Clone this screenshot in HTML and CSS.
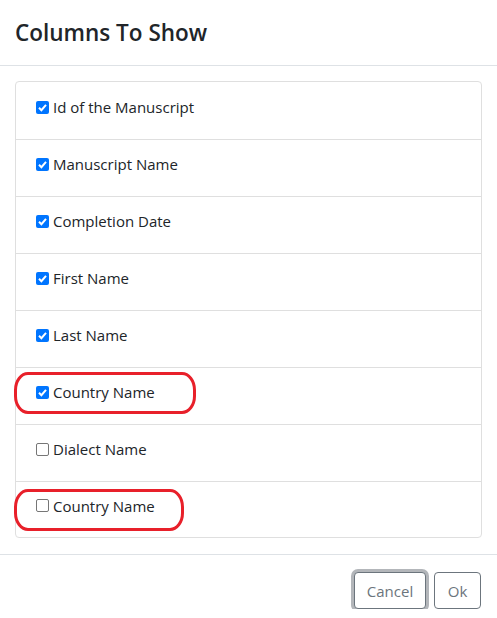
FILE: index.html
```html
<!DOCTYPE html>
<html>
<head>
<meta charset="utf-8">
<link rel="stylesheet" href="styles.css">
</head>
<body>
<div class="modal">
  <div class="modal-header">
    <h5 class="modal-title">Columns To Show</h5>
  </div>
  <div class="modal-body">
    <ul class="list">
      <li class="item"><span class="cb on"><svg viewBox="0 0 13 13"><path d="M3 6.8 L5.4 9.2 L10 3.8" /></svg></span><span class="label">Id of the Manuscript</span></li>
      <li class="item"><span class="cb on"><svg viewBox="0 0 13 13"><path d="M3 6.8 L5.4 9.2 L10 3.8" /></svg></span><span class="label">Manuscript Name</span></li>
      <li class="item"><span class="cb on"><svg viewBox="0 0 13 13"><path d="M3 6.8 L5.4 9.2 L10 3.8" /></svg></span><span class="label">Completion Date</span></li>
      <li class="item"><span class="cb on"><svg viewBox="0 0 13 13"><path d="M3 6.8 L5.4 9.2 L10 3.8" /></svg></span><span class="label">First Name</span></li>
      <li class="item"><span class="cb on"><svg viewBox="0 0 13 13"><path d="M3 6.8 L5.4 9.2 L10 3.8" /></svg></span><span class="label">Last Name</span></li>
      <li class="item"><span class="cb on"><svg viewBox="0 0 13 13"><path d="M3 6.8 L5.4 9.2 L10 3.8" /></svg></span><span class="label">Country Name</span><span class="mark mark-a"></span></li>
      <li class="item"><span class="cb off"></span><span class="label">Dialect Name</span></li>
      <li class="item"><span class="cb off"></span><span class="label">Country Name</span><span class="mark mark-b"></span></li>
    </ul>
  </div>
  <div class="modal-footer">
    <button class="btn btn-focus">Cancel</button>
    <button class="btn btn-ok">Ok</button>
  </div>
</div>
</body>
</html>
```
FILE: styles.css
```css
html, body {
  margin: 0;
  padding: 0;
  background: #fff;
}
body {
  font-family: "Open Sans", "Noto Sans", sans-serif;
  color: #212529;
  width: 497px;
}
.modal {
  display: flex;
  flex-direction: column;
}
.modal-header {
  height: 66px;
  box-sizing: border-box;
  border-bottom: 1px solid #dee2e6;
  padding: 0 15px;
  display: flex;
  align-items: center;
}
.modal-title {
  margin: 0;
  font-size: 22.5px;
  font-weight: 600;
  line-height: 1;
  padding-top: 1px;
  color: #212529;
}
.modal-body {
  padding: 15px 15px 16px;
}
.list {
  list-style: none;
  margin: 0;
  padding: 0;
  border: 1px solid #dfdfdf;
  border-radius: 4px;
}
.item {
  position: relative;
  height: 57px;
  box-sizing: border-box;
  padding: 0 20px 8px;
  display: flex;
  align-items: center;
  border-top: 1px solid #dfdfdf;
  font-size: 15px;
}
.item:first-child {
  border-top: none;
  padding-bottom: 7px;
}
.item:last-child {
  height: 56px;
}
.cb {
  width: 13px;
  height: 13px;
  box-sizing: border-box;
  border-radius: 2px;
  margin-right: 4px;
  flex: none;
  display: flex;
}
.cb.on {
  background: #0075ff;
}
.cb.off {
  border: 1px solid #767676;
  background: #fff;
}
.cb svg {
  width: 13px;
  height: 13px;
  fill: none;
  stroke: #fff;
  stroke-width: 2;
}
.label {
  line-height: 24px;
}
.mark {
  position: absolute;
  border: 3px solid #e8202a;
  border-radius: 14px / 18px;
  box-sizing: border-box;
  pointer-events: none;
}
.mark-a {
  left: -2px;
  top: 4px;
  width: 182px;
  height: 42px;
}
.mark-b {
  left: -2px;
  top: 7px;
  width: 170px;
  height: 42px;
}
.modal-footer {
  border-top: 1px solid #dee2e6;
  padding: 17px 16px 0 0;
  display: flex;
  justify-content: flex-end;
  gap: 8px;
}
.btn {
  font-family: inherit;
  font-size: 15px;
  color: #6c757d;
  background: #fff;
  border: 1px solid #6c757d;
  border-radius: 4px;
  height: 37px;
  padding: 0 11px;
  margin: 0;
}
.btn-focus {
  box-shadow: 0 0 0 3px #b3b6ba;
  width: 72px;
}
.btn-ok {
  width: 47px;
  padding: 0;
}
```
